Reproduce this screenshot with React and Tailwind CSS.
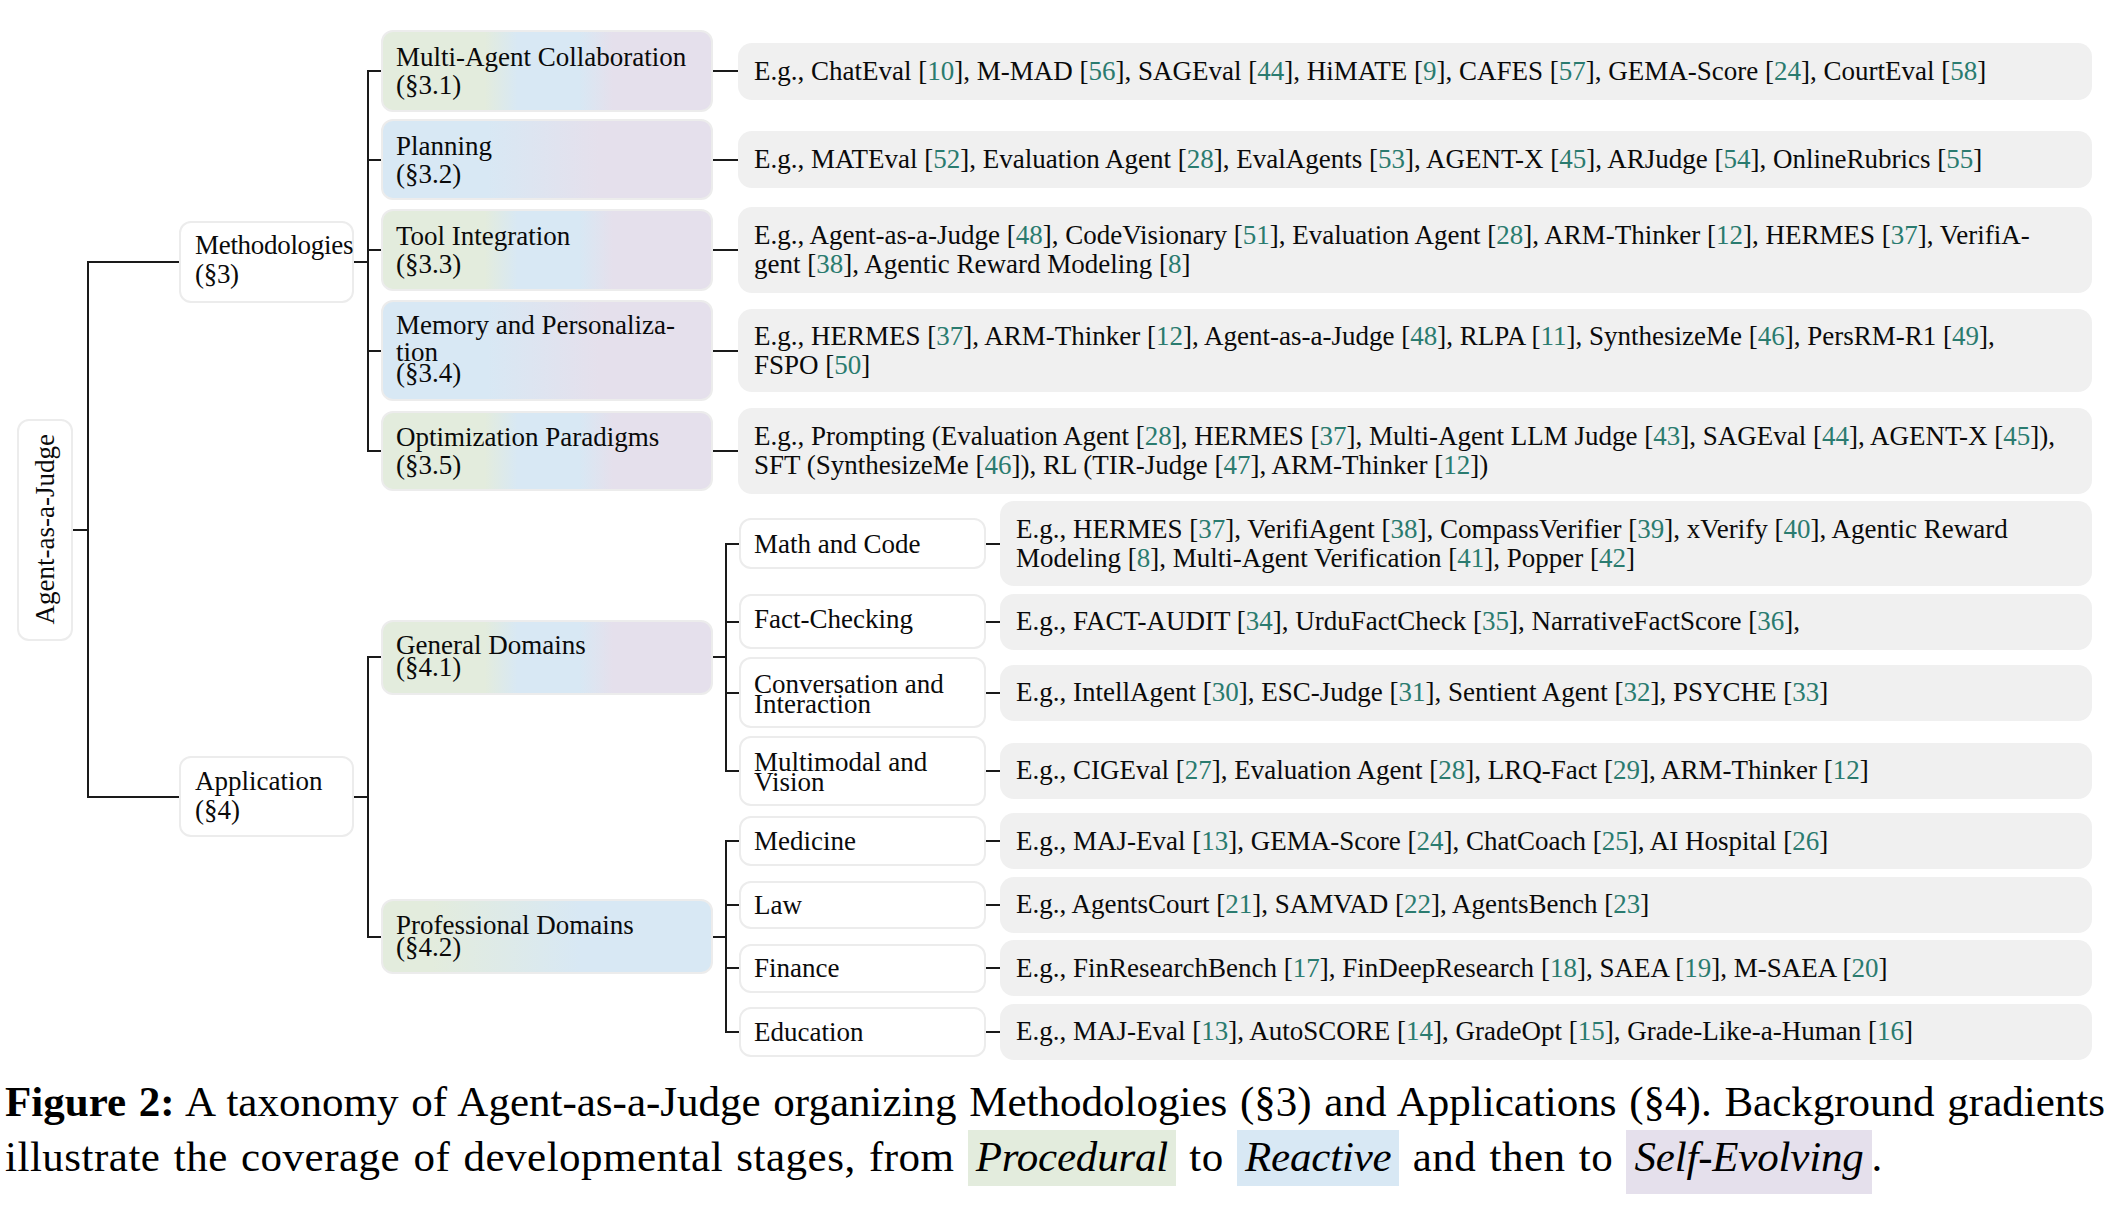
import React from 'react';

const LINE = 'border-[#1a1a1a]';

const GBP = 'bg-[linear-gradient(to_right,#e3ecdd_0%,#e3ecdd_31%,#d8e8f4_41%,#d8e8f4_60%,#e5e0ec_70%,#e5e0ec_100%)]';
const BP = 'bg-[linear-gradient(to_right,#d8e8f4_0%,#d8e8f4_32%,#e5e0ec_66%,#e5e0ec_100%)]';
const GB = 'bg-[linear-gradient(to_right,#e3ecdd_0%,#e3ecdd_15%,#d8e8f4_60%,#d8e8f4_100%)]';

const methods = [
  {
    lines: [['Multi-Agent Collaboration', 'leading-[28px]'], ['(§3.1)', 'leading-[28px]']],
    h: 'h-[82px]', bg: GBP, th: 'h-[57px]',
    text: ['E.g., ChatEval [10], M-MAD [56], SAGEval [44], HiMATE [9], CAFES [57], GEMA-Score [24], CourtEval [58]'],
  },
  {
    lines: [['Planning', 'leading-[28px]'], ['(§3.2)', 'leading-[28px]']],
    h: 'h-[81px]', bg: BP, th: 'h-[57px]',
    text: ['E.g., MATEval [52], Evaluation Agent [28], EvalAgents [53], AGENT-X [45], ARJudge [54], OnlineRubrics [55]'],
  },
  {
    lines: [['Tool Integration', 'leading-[28px]'], ['(§3.3)', 'leading-[28px]']],
    h: 'h-[82px]', bg: GBP, th: 'h-[86px]',
    text: [
      'E.g., Agent-as-a-Judge [48], CodeVisionary [51], Evaluation Agent [28], ARM-Thinker [12], HERMES [37], VerifiA-',
      'gent [38], Agentic Reward Modeling [8]',
    ],
  },
  {
    lines: [['Memory and Personaliza-', 'leading-[27px]'], ['tion', 'leading-[27px]'], ['(§3.4)', 'leading-[14px]']],
    h: 'h-[101px]', bg: BP, extra: 'pb-[10px]', th: 'h-[83px]',
    text: [
      'E.g., HERMES [37], ARM-Thinker [12], Agent-as-a-Judge [48], RLPA [11], SynthesizeMe [46], PersRM-R1 [49],',
      'FSPO [50]',
    ],
  },
  {
    lines: [['Optimization Paradigms', 'leading-[28px]'], ['(§3.5)', 'leading-[28px]']],
    h: 'h-[80px]', bg: GBP, th: 'h-[86px]',
    text: [
      'E.g., Prompting (Evaluation Agent [28], HERMES [37], Multi-Agent LLM Judge [43], SAGEval [44], AGENT-X [45]),',
      'SFT (SynthesizeMe [46]), RL (TIR-Judge [47], ARM-Thinker [12])',
    ],
  },
];

const general = [
  {
    lines: [['Math and Code', 'leading-[28px]']], h: 'h-[51px]', th: 'h-[85px]',
    text: [
      'E.g., HERMES [37], VerifiAgent [38], CompassVerifier [39], xVerify [40], Agentic Reward',
      'Modeling [8], Multi-Agent Verification [41], Popper [42]',
    ],
  },
  {
    lines: [['Fact-Checking', 'leading-[28px]']], h: 'h-[55px]', extra: 'pb-[6px]', th: 'h-[56px]',
    text: ['E.g., FACT-AUDIT [34], UrduFactCheck [35], NarrativeFactScore [36],'],
  },
  {
    lines: [['Conversation and', 'leading-[28px]'], ['Interaction', 'leading-[12px]']], h: 'h-[71px]', extra: 'pb-[6px]', th: 'h-[56px]',
    text: ['E.g., IntellAgent [30], ESC-Judge [31], Sentient Agent [32], PSYCHE [33]'],
  },
  {
    lines: [['Multimodal and', 'leading-[28px]'], ['Vision', 'leading-[12px]']], h: 'h-[70px]', extra: 'pb-[6px]', th: 'h-[56px]',
    text: ['E.g., CIGEval [27], Evaluation Agent [28], LRQ-Fact [29], ARM-Thinker [12]'],
  },
];

const professional = [
  { lines: [['Medicine', 'leading-[28px]']], h: 'h-[50px]', th: 'h-[56px]', text: ['E.g., MAJ-Eval [13], GEMA-Score [24], ChatCoach [25], AI Hospital [26]'] },
  { lines: [['Law', 'leading-[28px]']], h: 'h-[48px]', th: 'h-[56px]', text: ['E.g., AgentsCourt [21], SAMVAD [22], AgentsBench [23]'] },
  { lines: [['Finance', 'leading-[28px]']], h: 'h-[49px]', th: 'h-[56px]', text: ['E.g., FinResearchBench [17], FinDeepResearch [18], SAEA [19], M-SAEA [20]'] },
  { lines: [['Education', 'leading-[28px]']], h: 'h-[50px]', th: 'h-[56px]', text: ['E.g., MAJ-Eval [13], AutoSCORE [14], GradeOpt [15], Grade-Like-a-Human [16]'] },
];

function Cited({ s }) {
  return s.split(/(\[\d+\])/).map((p, i) =>
    /^\[\d+\]$/.test(p) ? (
      <span key={i}>[<span className="text-[#2a7b6f]">{p.slice(1, -1)}</span>]</span>
    ) : (
      <span key={i}>{p}</span>
    )
  );
}

// tree connector: vertical bar on the left edge, tick at the row's centre
function Conn({ pos, w = 'w-[14px]', basis = 'basis-0' }) {
  return (
    <div className={`flex ${w} shrink-0 flex-col self-stretch`}>
      <div className={`grow ${basis} ${LINE} ${pos !== 'first' ? 'border-l-2' : ''}`} />
      <div className={`grow basis-0 border-t-2 ${LINE} ${pos !== 'last' ? 'border-l-2' : ''}`} />
    </div>
  );
}

const Dash = ({ w }) => <div className={`h-[2px] shrink-0 bg-[#1a1a1a] ${w}`} />;

const posOf = (i, n) => (i === 0 ? 'first' : i === n - 1 ? 'last' : 'mid');

function TextBox({ h, w, lines }) {
  return (
    <div className={`flex shrink-0 flex-col justify-center rounded-[14px] bg-[#f0f0f0] pl-[16px] leading-[29px] ${h} ${w}`}>
      {lines.map((l, i) => (
        <div key={i} className="whitespace-nowrap"><Cited s={l} /></div>
      ))}
    </div>
  );
}

function Label({ lines, cls }) {
  return (
    <div className={`flex shrink-0 flex-col justify-center rounded-[12px] border-2 border-[#ececec] ${cls}`}>
      {lines.map(([t, lead], i) => (
        <div key={i} className={`whitespace-nowrap ${lead}`}>{t}</div>
      ))}
    </div>
  );
}

function LeafList({ items }) {
  return (
    <div className="flex flex-col">
      {items.map((it, i) => (
        <div key={i} className="flex">
          <Conn pos={posOf(i, items.length)} />
          <div className="flex items-center py-[3.75px]">
            <Label lines={it.lines} cls={`w-[247px] bg-white pl-[13px] ${it.h} ${it.extra || ''}`} />
            <Dash w="w-[14px]" />
            <TextBox h={it.th} w="w-[1092px]" lines={it.text} />
          </div>
        </div>
      ))}
    </div>
  );
}

export default function App() {
  return (
    <div className="min-h-[1219px] w-[2114px] bg-white pl-[17px] pt-[26.5px] font-['Liberation_Serif',serif] text-[27px] text-[#0a0a0a]">
      <div className="flex items-center">
        <div className="mb-[31px] flex items-center">
          <div className="flex h-[222px] w-[56px] items-center justify-center rounded-[12px] border-2 border-[#ececec]">
            <span className="rotate-180 whitespace-nowrap [writing-mode:vertical-rl]">Agent-as-a-Judge</span>
          </div>
          <Dash w="w-[14px]" />
        </div>

        <div className="flex flex-col">
          {/* Methodologies */}
          <div className="flex">
            <Conn pos="first" w="w-[92px]" />
            <div className="flex items-center">
              <Label
                lines={[['Methodologies', 'leading-[29px]'], ['(§3)', 'leading-[29px]']]}
                cls="h-[82px] w-[175px] bg-white pl-[14px] pb-[4px] tracking-[-0.3px]"
              />
              <Dash w="w-[13px]" />
              <div className="flex flex-col">
                {methods.map((m, i) => (
                  <div key={i} className="flex">
                    <Conn pos={posOf(i, methods.length)} />
                    <div className="flex items-center py-[3.5px]">
                      <Label lines={m.lines} cls={`w-[332px] pl-[13px] ${m.h} ${m.bg} ${m.extra || ''}`} />
                      <Dash w="w-[25px]" />
                      <TextBox h={m.th} w="w-[1354px]" lines={m.text} />
                    </div>
                  </div>
                ))}
              </div>
            </div>
          </div>

          {/* Application */}
          <div className="flex">
            <Conn pos="last" w="w-[92px]" basis="basis-[32.5px]" />
            <div className="flex items-center">
              <div className="mt-[32.5px] flex items-center">
                <Label
                  lines={[['Application', 'leading-[29px]'], ['(§4)', 'leading-[29px]']]}
                  cls="h-[81px] w-[175px] bg-white pl-[14px] pb-[2px]"
                />
                <Dash w="w-[13px]" />
              </div>
              <div className="flex flex-col">
                <div className="flex">
                  <Conn pos="first" basis="basis-[7px]" />
                  <div className="flex items-center">
                    <div className="mt-[7px] flex items-center">
                      <Label
                        lines={[['General Domains', 'leading-[28px]'], ['(§4.1)', 'leading-[16px]']]}
                        cls={`h-[75px] w-[332px] pl-[13px] pb-[8px] ${GBP}`}
                      />
                      <Dash w="w-[12px]" />
                    </div>
                    <LeafList items={general} />
                  </div>
                </div>
                <div className="flex">
                  <Conn pos="last" />
                  <div className="flex items-center">
                    <Label
                      lines={[['Professional Domains', 'leading-[28px]'], ['(§4.2)', 'leading-[16px]']]}
                      cls={`h-[75px] w-[332px] pl-[13px] pb-[8px] ${GB}`}
                    />
                    <Dash w="w-[12px]" />
                    <LeafList items={professional} />
                  </div>
                </div>
              </div>
            </div>
          </div>
        </div>
      </div>

      {/* caption */}
      <div className="-ml-[12px] mt-[10.5px] w-[2100px] text-[43px] leading-[55px] text-black">
        <div className="text-justify [text-align-last:justify]">
          <b>Figure 2:</b> A taxonomy of Agent-as-a-Judge organizing Methodologies (§3) and Applications (§4). Background gradients
        </div>
        <div className="whitespace-nowrap tracking-[0.5px] [word-spacing:2px]">
          illustrate the coverage of developmental stages, from{' '}
          <span className="bg-[#e3ecdd] px-[8px] pb-[6px] pt-[3px] italic tracking-[-0.2px]">Procedural</span> to{' '}
          <span className="bg-[#d8e8f4] px-[8px] pb-[6px] pt-[3px] italic tracking-[-0.2px]">Reactive</span> and then to{' '}
          <span className="bg-[#e5e0ec] px-[8px] pb-[14px] pt-[3px] italic tracking-[-0.2px]">Self-Evolving</span>.
        </div>
      </div>
    </div>
  );
}
